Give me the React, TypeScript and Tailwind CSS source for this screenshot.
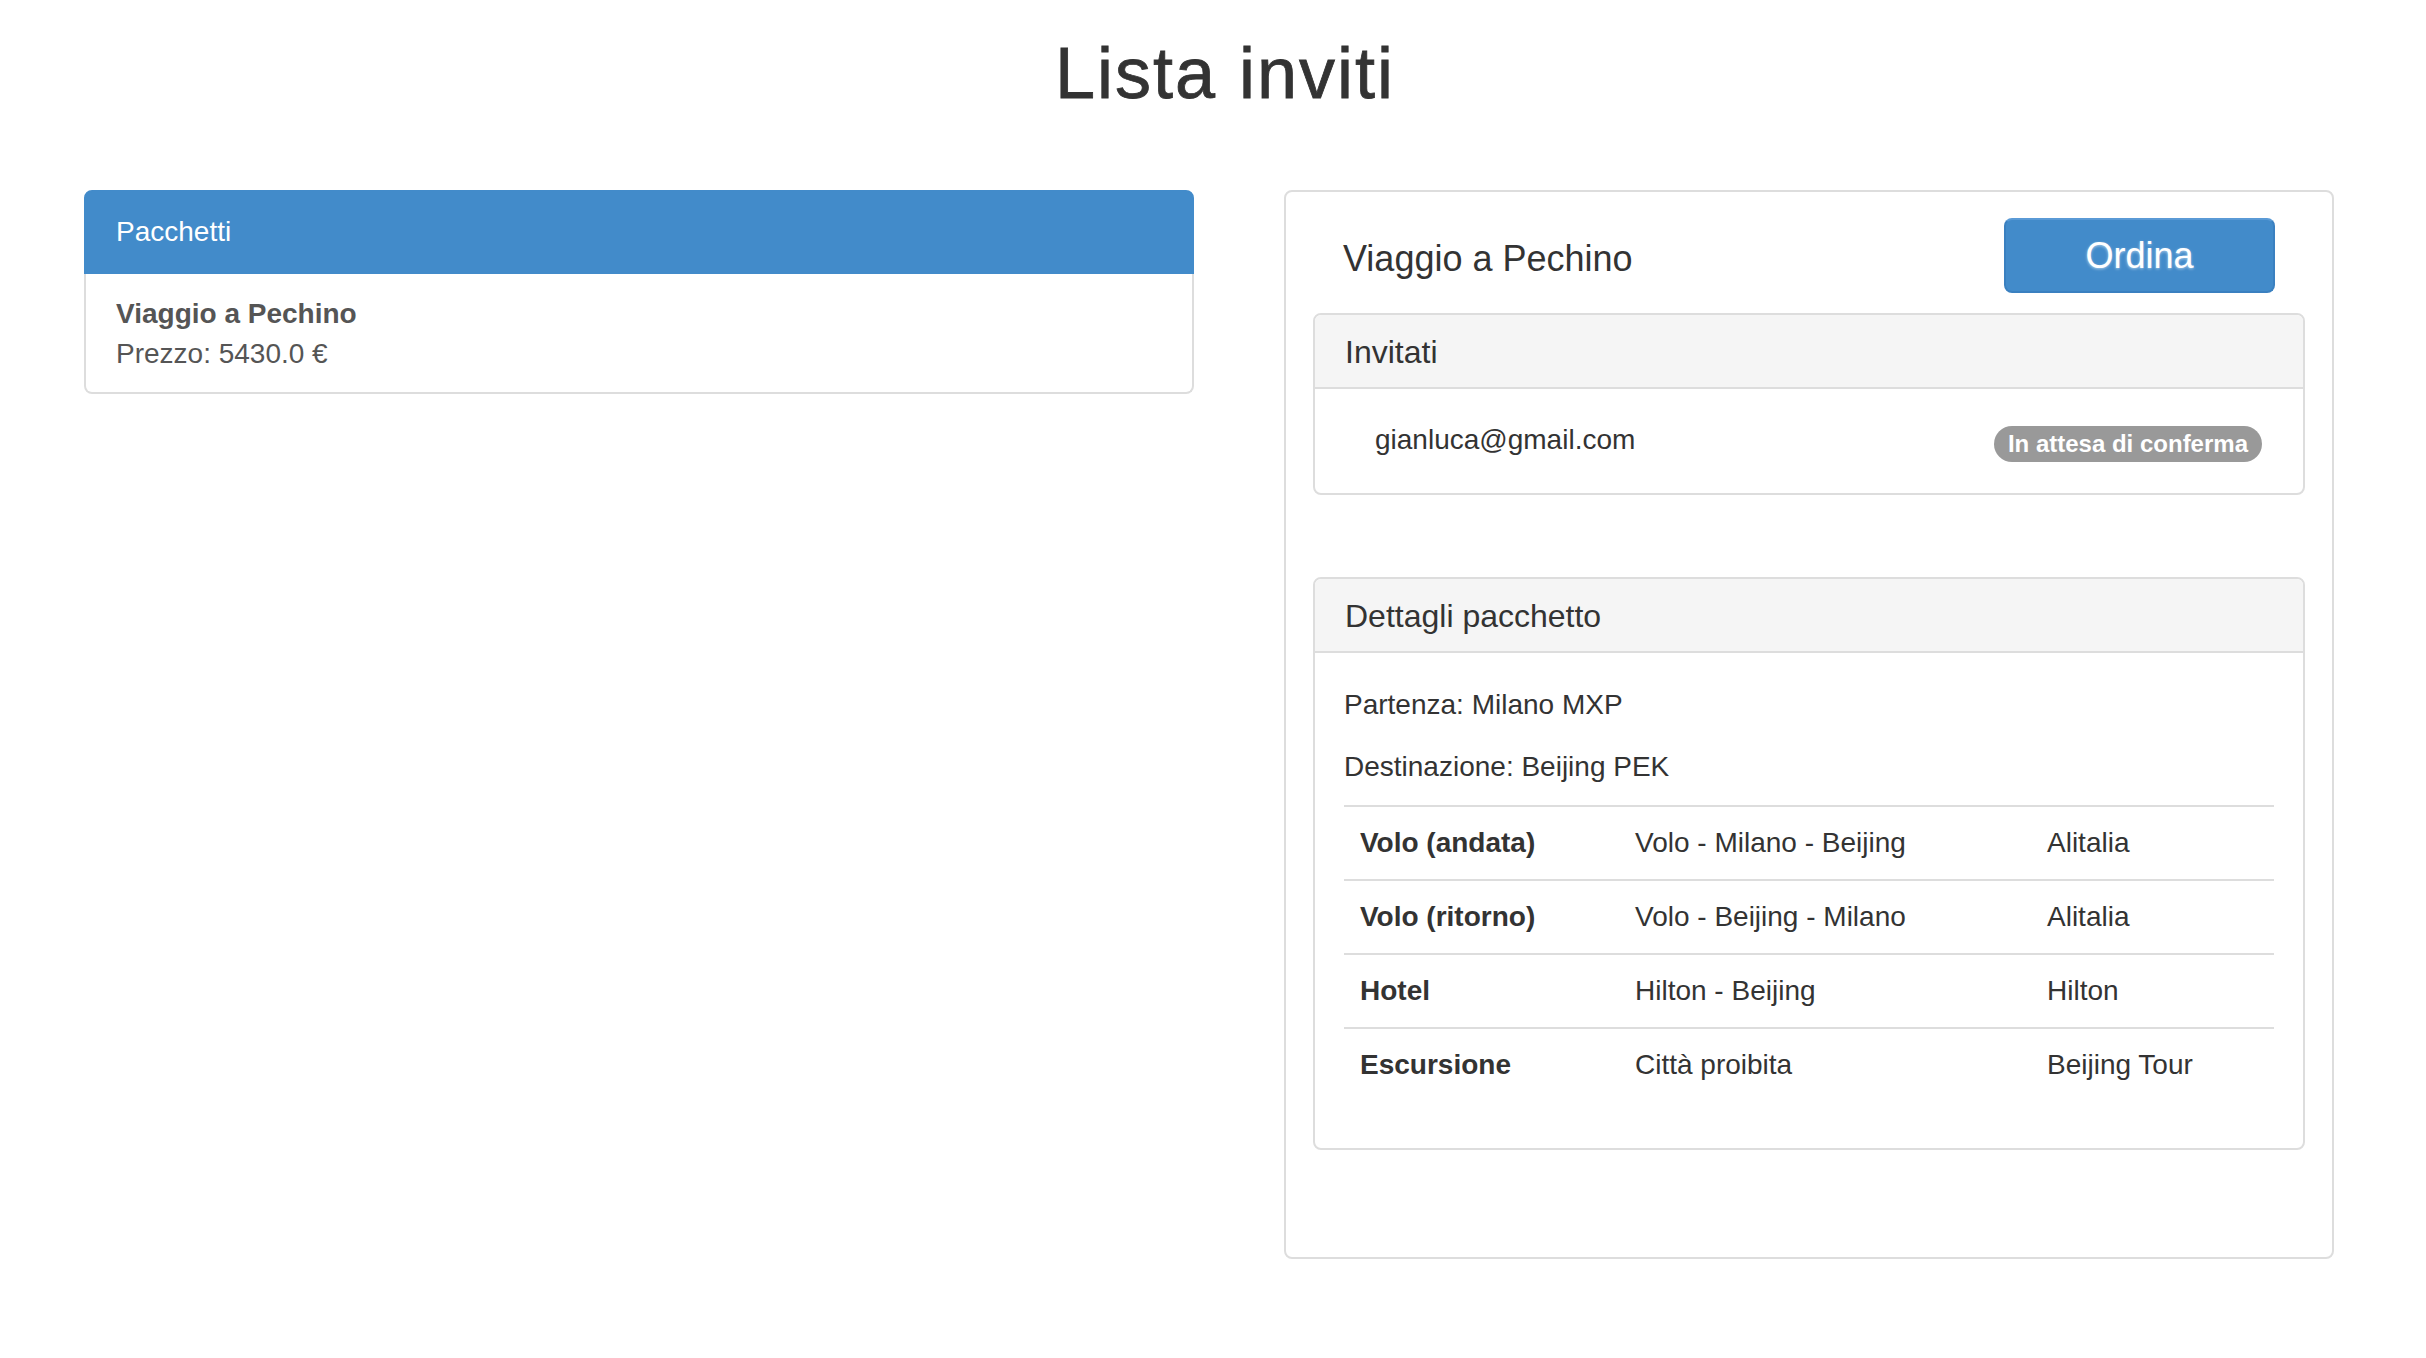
export default function App() {
  const rows = [
    ["Volo (andata)", "Volo - Milano - Beijing", "Alitalia"],
    ["Volo (ritorno)", "Volo - Beijing - Milano", "Alitalia"],
    ["Hotel", "Hilton - Beijing", "Hilton"],
    ["Escursione", "Città proibita", "Beijing Tour"],
  ];
  return (
    <div className="min-h-screen bg-white text-[#333] font-['Liberation_Sans',Arial,sans-serif]">
      <h1 className="pt-[34px] pl-[24px] text-center text-[72px] leading-[79px] font-normal tracking-[2px] [-webkit-text-stroke:0.8px_#333]">
        Lista inviti
      </h1>
      <div className="mt-[77px] ml-[84px] flex items-start gap-[90px]">
        {/* Left column */}
        <div className="w-[1110px]">
          <div className="rounded-t-[8px] border-2 border-[#428bca] bg-[#428bca] px-[30px] py-[20px] text-[28px] leading-[40px] text-white">
            Pacchetti
          </div>
          <div className="rounded-b-[8px] border-2 border-t-0 border-[#ddd] px-[30px] pt-[20px] pb-[18px] text-[28px] leading-[40px] text-[#555]">
            <div className="font-bold">Viaggio a Pechino</div>
            <div>Prezzo: 5430.0 €</div>
          </div>
        </div>

        {/* Right column */}
        <div className="w-[1050px] rounded-[8px] border-2 border-[#ddd] px-[27px] pt-[26px] pb-[107px]">
          <div className="mb-[20px] flex items-center justify-between px-[30px]">
            <h2 className="mt-[6px] text-[36px] leading-[40px] font-normal">Viaggio a Pechino</h2>
            <button className="h-[75px] w-[271px] rounded-[8px] border-2 border-[#3a80c0] border-t-[#5a9ad6] bg-[#428bca] text-[36px] leading-[40px] text-white [text-shadow:0_1px_3px_rgba(255,255,255,0.55)]">
              Ordina
            </button>
          </div>

          <div className="overflow-hidden rounded-[8px] border-2 border-[#ddd]">
            <div className="border-b-2 border-[#ddd] bg-[#f5f5f5] px-[30px] pt-[20px] pb-[17px] text-[32px] leading-[35px]">
              Invitati
            </div>
            <div className="flex items-start justify-between pl-[60px] pr-[41px] pt-[31px] pb-[31px]">
              <span className="text-[28px] leading-[40px]">gianluca@gmail.com</span>
              <span className="mt-[6px] h-[36px] rounded-full bg-[#999] px-[14px] text-[24px] font-bold leading-[36px] text-white">
                In attesa di conferma
              </span>
            </div>
          </div>

          <div className="mt-[82px] overflow-hidden rounded-[8px] border-2 border-[#ddd]">
            <div className="border-b-2 border-[#ddd] bg-[#f5f5f5] px-[30px] pt-[20px] pb-[17px] text-[32px] leading-[35px]">
              Dettagli pacchetto
            </div>
            <div className="px-[29px] pt-[32px] pb-[47px] text-[28px] leading-[40px]">
              <p className="mb-[22px]">Partenza: Milano MXP</p>
              <p className="mb-[18px]">Destinazione: Beijing PEK</p>
              <table className="w-full table-fixed border-separate border-spacing-0">
                <colgroup>
                  <col className="w-[275px]" />
                  <col className="w-[412px]" />
                  <col className="w-[243px]" />
                </colgroup>
                <tbody>
                  {rows.map((r) => (
                    <tr key={r[0]}>
                      <td className="border-t-2 border-[#ddd] px-[16px] py-[16px] font-bold">{r[0]}</td>
                      <td className="border-t-2 border-[#ddd] px-[16px] py-[16px]">{r[1]}</td>
                      <td className="border-t-2 border-[#ddd] px-[16px] py-[16px]">{r[2]}</td>
                    </tr>
                  ))}
                </tbody>
              </table>
            </div>
          </div>
        </div>
      </div>
    </div>
  );
}
